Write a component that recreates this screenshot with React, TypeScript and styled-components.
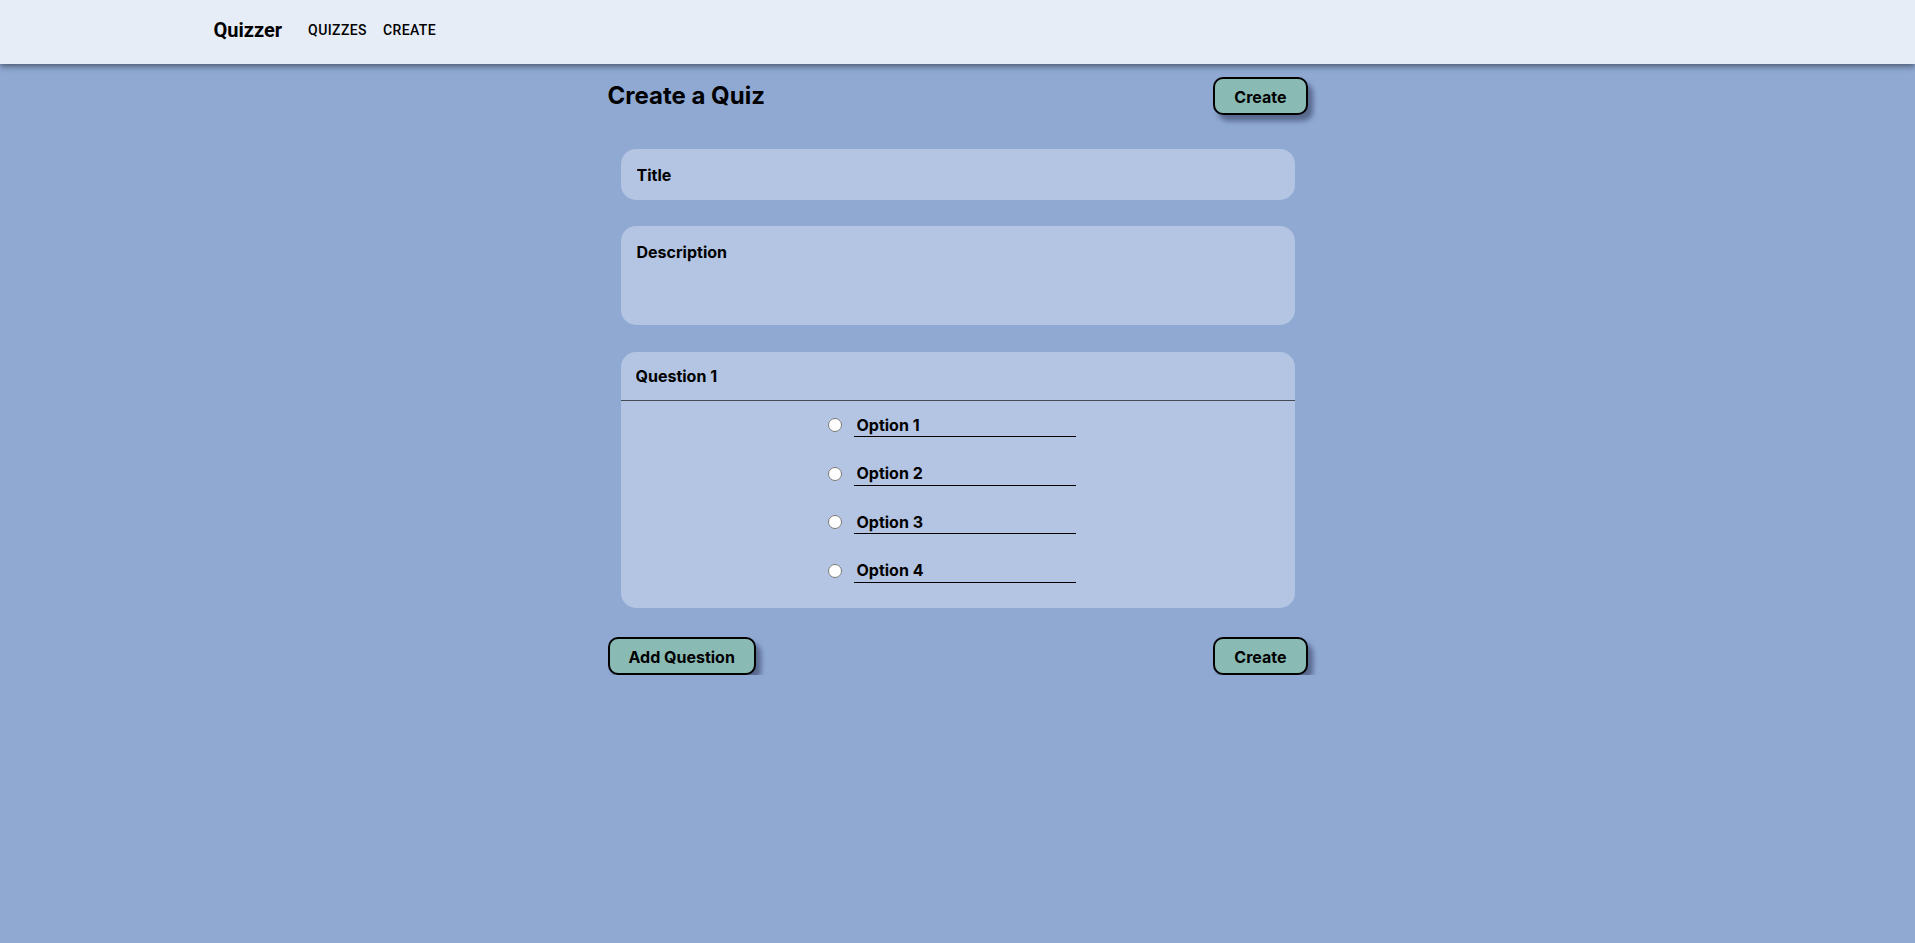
import styled, { createGlobalStyle } from "styled-components";

const GlobalStyle = createGlobalStyle`
	html, body {
		margin: 0;
		padding: 0;
		background-color: #8fa9d3;
		font-family: Inter, "Liberation Sans", sans-serif;
	}

	* {
		box-sizing: border-box;
	}
`;

const NavBar = styled.header`
	height: 64px;
	background-color: #e7edf7;
	box-shadow: 0 2px 4px -1px rgba(0, 0, 0, 0.3), 0 4px 5px 0 rgba(0, 0, 0, 0.16),
		0 1px 10px 0 rgba(0, 0, 0, 0.12);
	position: relative;
	z-index: 2;
`;

const NavInner = styled.div`
	max-width: 1536px;
	height: 100%;
	margin: 0 auto;
	padding: 0 24px;
	display: flex;
	align-items: center;
	font-family: Roboto, "Liberation Sans", sans-serif;
	color: #000;
`;

const Brand = styled.div`
	font-size: 20px;
	font-weight: 700;
	margin-right: 18px;
	margin-top: -5px;
`;

const NavLink = styled.a`
	padding: 6px 8px;
	font-size: 14px;
	font-weight: 500;
	letter-spacing: 0.4px;
	text-transform: uppercase;
	cursor: pointer;
	margin-top: -5px;
`;

const Page = styled.main`
	width: 700px;
	margin: 13px auto 0;
`;

const Header = styled.div`
	height: 38px;
	display: flex;
	justify-content: space-between;
	align-items: center;

	h1 {
		margin: -2px 0 0;
		font-size: 24px;
		font-weight: 700;
		color: #000;
	}
`;

const Button = styled.button`
	height: 38px;
	padding: 2px 19px 0;
	font-family: Inter, "Liberation Sans", sans-serif;
	font-size: 16px;
	font-weight: 700;
	color: #000;
	background-color: #8abab4;
	border: 2px solid #000;
	border-radius: 10px;
	box-shadow: 5px 6px 5px rgba(52, 62, 95, 0.6);
	cursor: pointer;
`;

const Form = styled.div`
	margin-top: 34px;
	display: flex;
	flex-direction: column;
`;

const Card = styled.div<{ $gap: number }>`
	margin: 0 13px ${(p) => p.$gap}px;
	background-color: #b3c5e2;
	border-radius: 15px;
	overflow: hidden;
`;

const Field = styled.input`
	display: block;
	width: 100%;
	height: 51px;
	padding: 1px 16px 0;
	border: none;
	background: transparent;
	font-family: inherit;
	font-size: 16px;
	font-weight: 700;
	color: #000;
	outline: none;

	&::placeholder {
		color: #000;
		opacity: 1;
	}
`;

const Area = styled.textarea`
	display: block;
	width: 100%;
	height: 99px;
	padding: 16px 16px;
	border: none;
	background: transparent;
	resize: none;
	font-family: inherit;
	font-size: 16px;
	font-weight: 700;
	line-height: 20px;
	color: #000;
	outline: none;

	&::placeholder {
		color: #000;
		opacity: 1;
	}
`;

const QuestionField = styled(Field)`
	height: 49px;
	padding: 0 15px 1px;
	border-bottom: 1px solid #454a55;
`;

const Options = styled.div`
	padding: 12px 12px 25px 0;
	display: flex;
	flex-direction: column;
	align-items: center;
	gap: 24.5px;
`;

const OptionRow = styled.label`
	display: flex;
	align-items: center;
	gap: 12px;

	input[type="radio"] {
		width: 14px;
		height: 14px;
		margin: 0;
		accent-color: #8a8a8a;
	}
`;

const OptionInput = styled.input`
	width: 222px;
	height: 24px;
	padding: 0 3px;
	border: none;
	border-bottom: 1px solid #000;
	background: transparent;
	font-family: inherit;
	font-size: 16px;
	font-weight: 700;
	color: #000;
	outline: none;

	&::placeholder {
		color: #000;
		opacity: 1;
	}
`;

const Footer = styled.div`
	margin-top: 3px;
	display: flex;
	justify-content: space-between;
`;

const options = ["Option 1", "Option 2", "Option 3", "Option 4"];

const App = () => {
	return (
		<>
			<GlobalStyle />
			<NavBar>
				<NavInner>
					<Brand>Quizzer</Brand>
					<NavLink>Quizzes</NavLink>
					<NavLink>Create</NavLink>
				</NavInner>
			</NavBar>
			<Page>
				<Header>
					<h1>Create a Quiz</h1>
					<Button>Create</Button>
				</Header>
				<Form>
					<Card $gap={26}>
						<Field placeholder="Title" />
					</Card>
					<Card $gap={27}>
						<Area placeholder="Description" />
					</Card>
					<Card $gap={26}>
						<QuestionField placeholder="Question 1" />
						<Options>
							{options.map((o) => (
								<OptionRow key={o}>
									<input type="radio" name="answer" />
									<OptionInput placeholder={o} />
								</OptionRow>
							))}
						</Options>
					</Card>
				</Form>
				<Footer>
					<Button>Add Question</Button>
					<Button>Create</Button>
				</Footer>
			</Page>
		</>
	);
};

export default App;
